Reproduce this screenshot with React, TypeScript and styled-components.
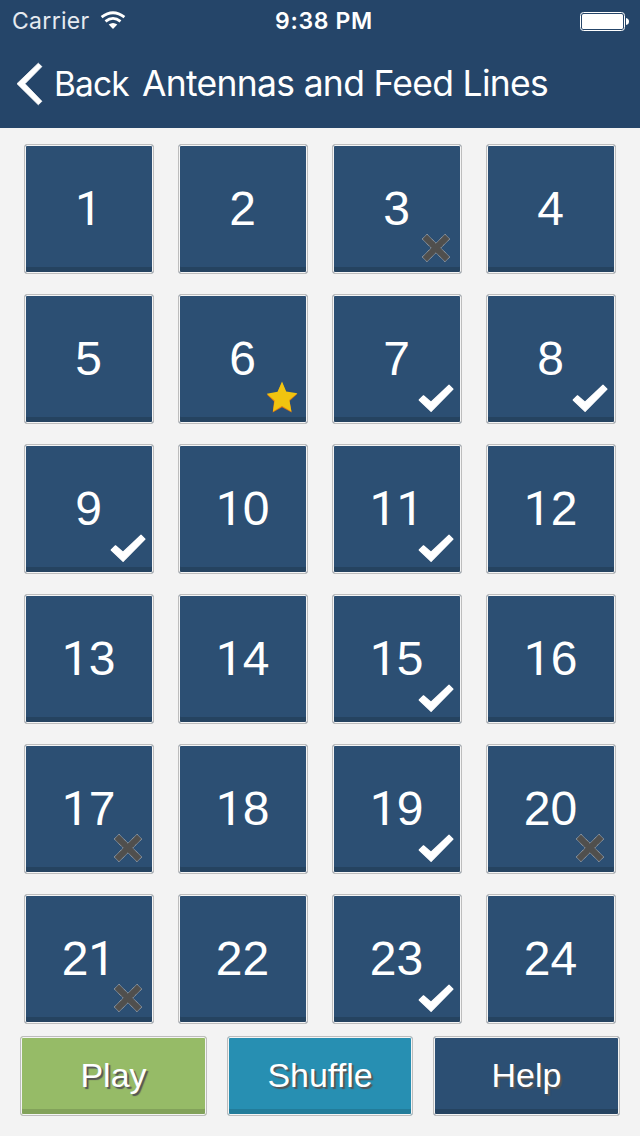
import React from "react";
import styled, { createGlobalStyle } from "styled-components";

const GlobalStyle = createGlobalStyle`
  * { box-sizing: border-box; }
  body { margin: 0; background: #f3f3f3; }
  button { font: inherit; }
`;

const Screen = styled.div`
  width: 640px;
  height: 1136px;
  overflow: hidden;
  background: #f3f3f3;
  font-family: "Liberation Sans", Arial, sans-serif;
`;

const Header = styled.header`
  height: 128px;
  background: #254569;
  color: #fff;
  font-family: Inter, sans-serif;
`;

const StatusBar = styled.div`
  height: 40px;
  display: grid;
  grid-template-columns: 1fr auto 1fr;
  align-items: center;
  padding: 0 11px 0 12px;
  font-size: 23.5px;
  line-height: 40px;
`;

const Carrier = styled.div`
  display: flex;
  align-items: center;
  gap: 10px;
  padding-top: 1px;
  color: #e6eaf0;
  font-size: 23px;
  font-weight: 400;
  letter-spacing: 0.3px;
`;

const Clock = styled.div`
  font-weight: 600;
  font-size: 23px;
  letter-spacing: 0.65px;
  padding: 1px 0 0 7px;
`;

const BatterySlot = styled.div`
  display: flex;
  justify-content: flex-end;
`;

const NavBar = styled.nav`
  height: 88px;
  display: flex;
  align-items: center;
  padding-left: 16px;
  white-space: nowrap;
`;

const BackButton = styled.button`
  display: flex;
  align-items: center;
  gap: 10px;
  width: 126px;
  padding: 0;
  border: 0;
  background: none;
  color: #fff;
  font-size: 33.5px;
  font-weight: 400;
  letter-spacing: -0.9px;
`;

const Title = styled.h1`
  margin: 0;
  padding-bottom: 1px;
  font-size: 35.5px;
  font-weight: 400;
  letter-spacing: -0.71px;
`;

const Grid = styled.main`
  display: grid;
  grid-template-columns: repeat(4, 130px);
  grid-auto-rows: 130px;
  gap: 20px 24px;
  padding: 16px 24px 12px;
`;

const Framed = styled.button<{ $fill: string; $edge: string }>`
  border: 1px solid #bdbdbd;
  border-radius: 3px;
  padding: 0;
  color: #fff;
  background: ${(p) => p.$fill};
  box-shadow: inset 0 0 0 1px #f4f4f4, inset 0 -6px 0 ${(p) => p.$edge};
  display: flex;
  align-items: center;
  justify-content: center;
`;

const Tile = styled(Framed)`
  position: relative;
  font-size: 48px;
  line-height: 54px;
  padding: 0 1px 1px 0;
`;

const Numeral = styled.span`
  height: 54px;
  white-space: nowrap;
`;

const PlainOne = styled.span`
  font-family: Roboto, sans-serif;
  line-height: 1;
`;

const Badge = styled.svg`
  position: absolute;
  left: 83px;
  top: 85px;
`;

const Actions = styled.footer`
  display: grid;
  grid-template-columns: 187px 186px 187px;
  justify-content: space-between;
  padding: 0 20px;
`;

const Action = styled(Framed)`
  height: 80px;
  font-size: 34px;
  line-height: 40px;
  padding-bottom: 2px;
  text-shadow: 2px 2px 1px #555;
`;

type Mark = "check" | "cross" | "star";

const marks: Record<number, Mark> = {
  3: "cross",
  6: "star",
  7: "check",
  8: "check",
  9: "check",
  11: "check",
  15: "check",
  17: "cross",
  19: "check",
  20: "cross",
  21: "cross",
  23: "check",
};

const MarkIcon = ({ mark }: { mark: Mark }) => (
  <Badge width="40" height="36" viewBox="0 0 40 36">
    {mark === "check" && (
      <path
        d="M3.2 20 7.5 15.8 15 22.3 33 5.2 37 9.2 15.1 31.4Z"
        fill="#fff"
        stroke="#fff"
        strokeWidth="1.2"
        strokeLinejoin="round"
      />
    )}
    {mark === "cross" && (
      <path
        d="M11 4.2 20 13.2 29 4.2 33.8 9 24.8 18 33.8 27 29 31.8 20 22.8 11 31.8 6.2 27 15.2 18 6.2 9Z"
        fill="#504f4d"
        stroke="#b9bcbf"
        strokeWidth="0.9"
        strokeDasharray="1.1 0.6"
      />
    )}
    {mark === "star" && (
      <>
        <path
          d="M20 2.6 24.2 12.4 35.2 13.9 27.6 20.9 29.7 32.5 20 27.2 10.7 32.5 12 21.4 4.8 14.4 15.4 12.6Z"
          fill="#e07a12"
        />
        <path
          d="M20 1.6 24.2 11.6 35.4 13.2 27.3 20 29.4 31.4 20 26 11 31.4 12.6 20.6 4.8 13.7 15.6 11.8Z"
          fill="#f1c40f"
        />
      </>
    )}
  </Badge>
);

const WifiIcon = () => (
  <svg width="26" height="20" viewBox="0 0 26 20">
    <g fill="none" stroke="#fff" strokeWidth="2.8">
      <path d="M1.6 6.2Q13-2.8 24.4 6.2" />
      <path d="M5.5 10.4Q13 4.4 20.5 10.4" />
    </g>
    <path d="M8.7 13.6Q13 10.4 17.3 13.6L13 18Z" fill="#fff" />
  </svg>
);

const BatteryIcon = () => (
  <svg width="50" height="20" viewBox="0 0 50 20">
    <rect x="1.5" y="1.5" width="44" height="18" rx="3" fill="none" stroke="#fff" />
    <rect x="3" y="3" width="41" height="15" rx="1.5" fill="#fff" />
    <path d="M47 7Q50 7.5 50 10.5T47 14Z" fill="#fff" />
  </svg>
);

const ChevronIcon = () => (
  <svg width="28" height="44" viewBox="0 0 28 44">
    <path
      d="M1 21.7 22.3 1.2 25.9 4.6 9 21.7 25.9 39.3 22.3 42.8Z"
      fill="#fff"
      stroke="#fff"
      strokeWidth="0.8"
    />
  </svg>
);

const questions = Array.from({ length: 24 }, (_, i) => i + 1);

export default function App() {
  return (
    <Screen>
      <GlobalStyle />
      <Header>
        <StatusBar>
          <Carrier>
            Carrier
            <WifiIcon />
          </Carrier>
          <Clock>9:38 PM</Clock>
          <BatterySlot>
            <BatteryIcon />
          </BatterySlot>
        </StatusBar>
        <NavBar>
          <BackButton>
            <ChevronIcon />
            Back
          </BackButton>
          <Title>Antennas and Feed Lines</Title>
        </NavBar>
      </Header>
      <Grid>
        {questions.map((n) => (
          <Tile key={n} $fill="#2c4f73" $edge="#254360">
            <Numeral>
              {String(n)
                .split("")
                .map((d, i) => (d === "1" ? <PlainOne key={i}>1</PlainOne> : d))}
            </Numeral>
            {marks[n] && <MarkIcon mark={marks[n]} />}
          </Tile>
        ))}
      </Grid>
      <Actions>
        <Action $fill="#96bb67" $edge="#82a25a">Play</Action>
        <Action $fill="#278fb2" $edge="#227c9a">Shuffle</Action>
        <Action $fill="#2c4f73" $edge="#254360">Help</Action>
      </Actions>
    </Screen>
  );
}
